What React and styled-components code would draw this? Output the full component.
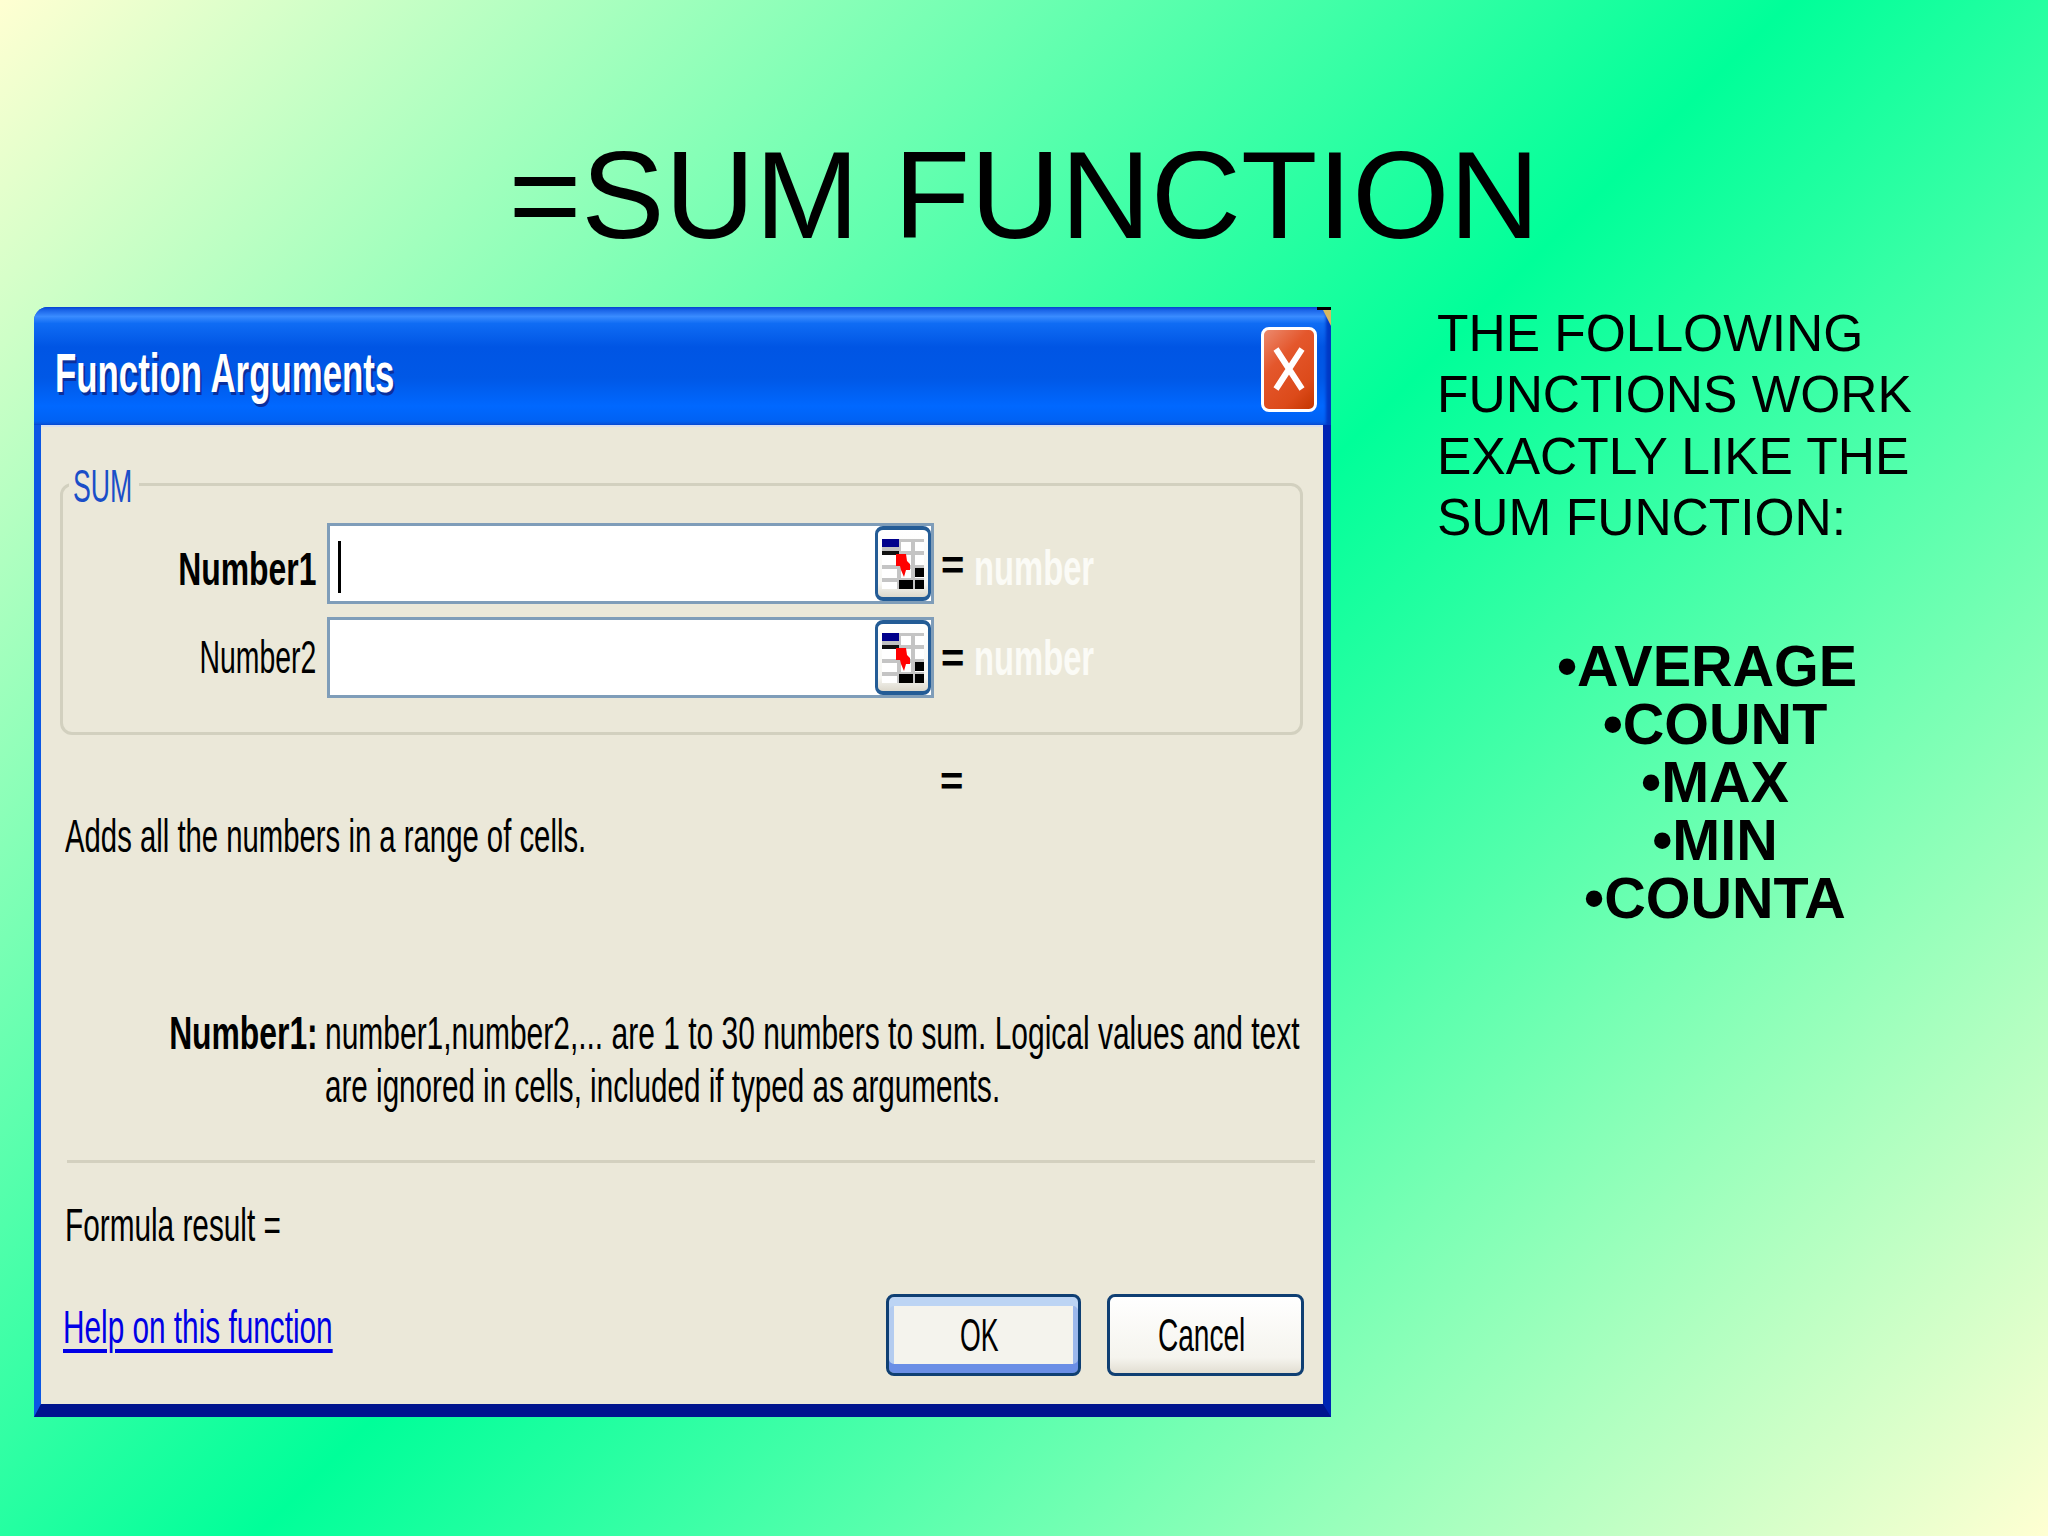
import React from "react";
import styled, { createGlobalStyle, css } from "styled-components";

const GlobalStyle = createGlobalStyle`
  html, body {
    margin: 0;
    padding: 0;
    background: #00ff99;
  }
  body {
    font-family: "Liberation Sans", Arial, sans-serif;
    color: #000;
  }
`;

// the dialog in the slide is a stretched bitmap, so its text is squeezed sideways
const squeeze = css`
  display: inline-block;
  white-space: nowrap;
  transform: scaleX(${(p) => p.$scale || 0.6});
  transform-origin: ${(p) => p.$origin || "left"} center;
`;

const Slide = styled.div`
  width: 2048px;
  height: 1536px;
  overflow: hidden;
  display: flex;
  flex-direction: column;
  background: linear-gradient(135deg, #ffffd2 0%, #00ff99 50%, #ffffd2 100%);
`;

const Heading = styled.h1`
  margin: 0;
  height: 302px;
  padding-top: 135px;
  box-sizing: border-box;
  text-align: center;
  font-size: 125px;
  line-height: 120px;
  font-weight: 400;
`;

const Columns = styled.div`
  display: flex;
  align-items: flex-start;
  padding-left: 34px;
`;

const Dialog = styled.section`
  position: relative;
  width: 1297px;
  height: 1110px;
  margin-top: 5px;
  display: flex;
  flex-direction: column;
  flex-shrink: 0;
  border-top-left-radius: 14px;
  overflow: hidden;
  background: #0b4fdc;

  &::before {
    content: "";
    position: absolute;
    top: 0;
    right: 0;
    width: 14px;
    height: 3px;
    background: #000;
  }
  &::after {
    content: "";
    position: absolute;
    top: 3px;
    right: 0;
    border-top: 0 solid transparent;
    border-right: 8px solid #d8b860;
    border-bottom: 16px solid transparent;
  }
`;

const TitleBar = styled.header`
  height: 118px;
  flex-shrink: 0;
  display: flex;
  align-items: center;
  justify-content: space-between;
  padding: 2px 14px 0 21px;
  box-sizing: border-box;
  background: linear-gradient(
    to bottom,
    #0a50dc 0%,
    #3a8cff 8%,
    #0f6cf4 14%,
    #0055e4 34%,
    #0058e6 60%,
    #0068ff 84%,
    #0062f4 96%,
    #0a58dc 100%
  );
  box-shadow: inset -5px 0 3px #0038c4;
`;

const DialogTitle = styled.h2`
  ${squeeze}
  margin: 12px 0 0;
  width: 338px;
  font-size: 56px;
  line-height: 70px;
  font-weight: 700;
  color: #fff;
  text-shadow: 3px 3px 0 #0a2f9c;
`;

const CloseButton = styled.button`
  width: 56px;
  height: 85px;
  padding: 0;
  display: flex;
  align-items: center;
  justify-content: center;
  box-sizing: border-box;
  margin-top: 4px;
  border: 3px solid #fff;
  border-radius: 8px;
  background: linear-gradient(135deg, #ec8a6e 0%, #e4572c 35%, #dc4a1a 75%, #c43600 100%);
`;

const Frame = styled.div`
  flex: 1;
  display: flex;
  border-style: solid;
  border-width: 0 8px 13px 7px;
  border-color: transparent #0024b4 #00148e #0b57e4;
  min-height: 0;
`;

const Body = styled.div`
  flex: 1;
  display: flex;
  flex-direction: column;
  background: #ebe8d9;
  border-top: 2px solid #d8dff0;
  padding-top: 56px;
  min-width: 0;
`;

const GroupBox = styled.div`
  position: relative;
  margin: 0 20px 0 19px;
  height: 252px;
  box-sizing: border-box;
  padding-top: 37px;
  border: 3px solid #d2d0bf;
  border-radius: 12px;
  display: flex;
  flex-direction: column;
  gap: 13px;
`;

const Legend = styled.div`
  position: absolute;
  left: 6px;
  top: -18px;
  width: 70px;
  height: 36px;
  background: #ebe8d9;
  overflow: visible;
  font-size: 46px;
  line-height: 36px;
  color: #1a4ec8;
`;

const LegendText = styled.span`
  ${squeeze}
  margin-left: 4px;
`;

const ArgRow = styled.div`
  display: flex;
  align-items: center;
  height: 81px;
`;

const ArgLabel = styled.label`
  width: 264px;
  padding-right: 11px;
  box-sizing: border-box;
  flex-shrink: 0;
  text-align: right;
  font-size: 46px;
  line-height: 50px;
  font-weight: ${(p) => (p.$bold ? 700 : 400)};
  margin-top: ${(p) => p.$drop}px;
`;

const ArgLabelText = styled.span`
  ${squeeze}
`;

const ArgInput = styled.div`
  width: 607px;
  height: 81px;
  box-sizing: border-box;
  flex-shrink: 0;
  display: flex;
  align-items: center;
  border: 3px solid #7f9db9;
  background: #fff;
`;

const Caret = styled.span`
  width: 3px;
  height: 52px;
  margin: 6px 0 0 8px;
  background: #000;
`;

const RangeButton = styled.button`
  width: 56px;
  height: 75px;
  margin-left: auto;
  padding: 0;
  display: flex;
  align-items: center;
  justify-content: center;
  box-sizing: border-box;
  border-style: solid;
  border-width: 4px 3px;
  border-color: #245c96;
  border-radius: 8px;
  background: linear-gradient(to bottom, #fff 0%, #f6f6f2 80%, #dcd8cc 100%);
`;

const EqualSign = styled.span`
  flex-shrink: 0;
  width: 33px;
  margin-left: 7px;
  font-size: 40px;
  line-height: 40px;
  font-weight: 700;
  margin-top: ${(p) => p.$drop || 0}px;
`;

const ArgValue = styled.span`
  ${squeeze}
  font-size: 50px;
  line-height: 50px;
  font-weight: 700;
  color: #fbfbf6;
  margin-top: ${(p) => p.$drop}px;
`;

const ResultRow = styled.div`
  height: 44px;
  margin-top: 24px;
  padding-left: 892px;
  display: flex;
  align-items: center;
`;

const TextLine = styled.div`
  height: ${(p) => p.$height || 40}px;
  line-height: ${(p) => p.$height || 40}px;
  font-size: 46px;
  margin-top: ${(p) => p.$top || 0}px;
  padding-left: ${(p) => p.$left || 0}px;
`;

const LineText = styled.span`
  ${squeeze}
`;

const ArgHelp = styled.div`
  margin-top: 151px;
  display: grid;
  grid-template-columns: 284px 1fr;
  grid-auto-rows: 53px;
  font-size: 46px;
  line-height: 53px;
`;

const ArgHelpLabel = styled.div`
  text-align: right;
  padding-right: 7px;
  font-weight: 700;
`;

const ArgHelpLine = styled.div`
  grid-column: 2;
`;

const Separator = styled.hr`
  margin: 47px 8px 0 26px;
  height: 3px;
  border: 0;
  background: #d3d0bf;
`;

const Footer = styled.footer`
  margin-top: 49px;
  padding: 0 19px 0 22px;
  display: flex;
  align-items: flex-start;
  gap: 26px;
`;

const HelpLink = styled.a`
  ${squeeze}
  margin-top: 8px;
  margin-right: auto;
  font-size: 46px;
  line-height: 50px;
  color: #0000e6;
  text-decoration: underline;
  text-decoration-thickness: 4px;
  text-underline-offset: 6px;
`;

const PushButton = styled.button`
  width: ${(p) => p.$width}px;
  height: 82px;
  padding: 0 8px 0 0;
  box-sizing: border-box;
  font-family: inherit;
  font-size: 46px;
  color: #000;
  border: 3px solid #0f3f73;
  border-radius: 8px;
  background: linear-gradient(to bottom, #fff 0%, #f5f4ee 80%, #e2ded2 100%);
  ${(p) =>
    p.$default &&
    css`
      background: #f4f3ed;
      box-shadow: inset 0 9px 0 #bcd4f4, inset 0 -9px 0 #6a8ee6, inset 5px 0 0 #b4ccf0, inset -5px 0 0 #9cb8ec;
    `}
`;

const ButtonText = styled.span`
  ${squeeze}
`;

const Aside = styled.aside`
  margin-left: 106px;
  margin-top: 1px;
  width: 611px;
`;

const Note = styled.p`
  margin: 0;
  font-size: 51.5px;
  line-height: 61.4px;
`;

const FunctionList = styled.ul`
  list-style: none;
  margin: 88px 0 0;
  padding: 0;
  width: 556px;
  text-align: center;
  font-size: 57.5px;
  line-height: 58px;
  font-weight: 700;
`;

const CloseIcon = () => (
  <svg width="34" height="46" viewBox="0 0 34 46">
    <path d="M4 3 L30 43 M30 3 L4 43" stroke="#fff" strokeWidth="6" fill="none" />
  </svg>
);

const RangeIcon = () => (
  <svg width="42" height="50" viewBox="0 0 42 50">
    <rect x="0" y="0" width="42" height="50" fill="#fff" />
    <path d="M0 14H42M0 28H42M0 41H42M17 0V50M31 0V50M17 1H42" stroke="#c4c4c4" strokeWidth="4" fill="none" />
    <rect x="0" y="0" width="17" height="8" fill="#00008c" />
    <rect x="0" y="8" width="17" height="4" fill="#c0c0c0" />
    <rect x="0" y="12" width="17" height="4" fill="#111" />
    <polygon points="14,15 24,15 25,22 28,25 28,31 24,31 22,38 19,31 18,27 14,27" fill="#f00" />
    <rect x="33" y="29" width="9" height="9" fill="#000" />
    <rect x="17" y="41" width="14" height="9" fill="#000" />
    <rect x="33" y="41" width="9" height="9" fill="#000" />
  </svg>
);

const args = [
  { name: "Number1", bold: true, labelDrop: 10, eqDrop: 2, valueDrop: 8, labelScale: 0.693 },
  { name: "Number2", bold: false, labelDrop: -2, eqDrop: 0, valueDrop: 0, labelScale: 0.617 },
];

const functions = ["AVERAGE\u00a0", "COUNT", "MAX", "MIN", "COUNTA"];

export default function App() {
  return (
    <Slide>
      <GlobalStyle />
      <Heading>=SUM FUNCTION</Heading>
      <Columns>
        <Dialog>
          <TitleBar>
            <DialogTitle $scale={0.622}>Function Arguments</DialogTitle>
            <CloseButton aria-label="Close">
              <CloseIcon />
            </CloseButton>
          </TitleBar>
          <Frame>
            <Body>
              <GroupBox>
                <Legend>
                  <LegendText $scale={0.58}>SUM</LegendText>
                </Legend>
                {args.map((arg, i) => (
                  <ArgRow key={arg.name}>
                    <ArgLabel $bold={arg.bold} $drop={arg.labelDrop}>
                      <ArgLabelText $scale={arg.labelScale} $origin="right">
                        {arg.name}
                      </ArgLabelText>
                    </ArgLabel>
                    <ArgInput>
                      {i === 0 && <Caret />}
                      <RangeButton aria-label="Select range">
                        <RangeIcon />
                      </RangeButton>
                    </ArgInput>
                    <EqualSign $drop={arg.eqDrop}>=</EqualSign>
                    <ArgValue $scale={0.655} $drop={arg.valueDrop}>
                      number
                    </ArgValue>
                  </ArgRow>
                ))}
              </GroupBox>
              <ResultRow>
                <EqualSign>=</EqualSign>
              </ResultRow>
              <TextLine $top={13} $left={24}>
                <LineText $scale={0.637}>Adds all the numbers in a range of cells.</LineText>
              </TextLine>
              <ArgHelp>
                <ArgHelpLabel>
                  <LineText $scale={0.692} $origin="right">
                    Number1:
                  </LineText>
                </ArgHelpLabel>
                <div>
                  <LineText $scale={0.6515}>number1,number2,... are 1 to 30 numbers to sum. Logical values and text</LineText>
                </div>
                <ArgHelpLine>
                  <LineText $scale={0.644}>are ignored in cells, included if typed as arguments.</LineText>
                </ArgHelpLine>
              </ArgHelp>
              <Separator />
              <TextLine $top={42} $left={24}>
                <LineText $scale={0.647}>Formula result =</LineText>
              </TextLine>
              <Footer>
                <HelpLink href="#help" $scale={0.647}>
                  Help on this function
                </HelpLink>
                <PushButton $default $width={195}>
                  <ButtonText $scale={0.58} $origin="center">
                    OK
                  </ButtonText>
                </PushButton>
                <PushButton $width={197}>
                  <ButtonText $scale={0.61} $origin="center">
                    Cancel
                  </ButtonText>
                </PushButton>
              </Footer>
            </Body>
          </Frame>
        </Dialog>
        <Aside>
          <Note>
            THE FOLLOWING
            <br />
            FUNCTIONS WORK
            <br />
            EXACTLY LIKE THE
            <br />
            SUM FUNCTION:
          </Note>
          <FunctionList>
            {functions.map((name) => (
              <li key={name}>•{name}</li>
            ))}
          </FunctionList>
        </Aside>
      </Columns>
    </Slide>
  );
}
